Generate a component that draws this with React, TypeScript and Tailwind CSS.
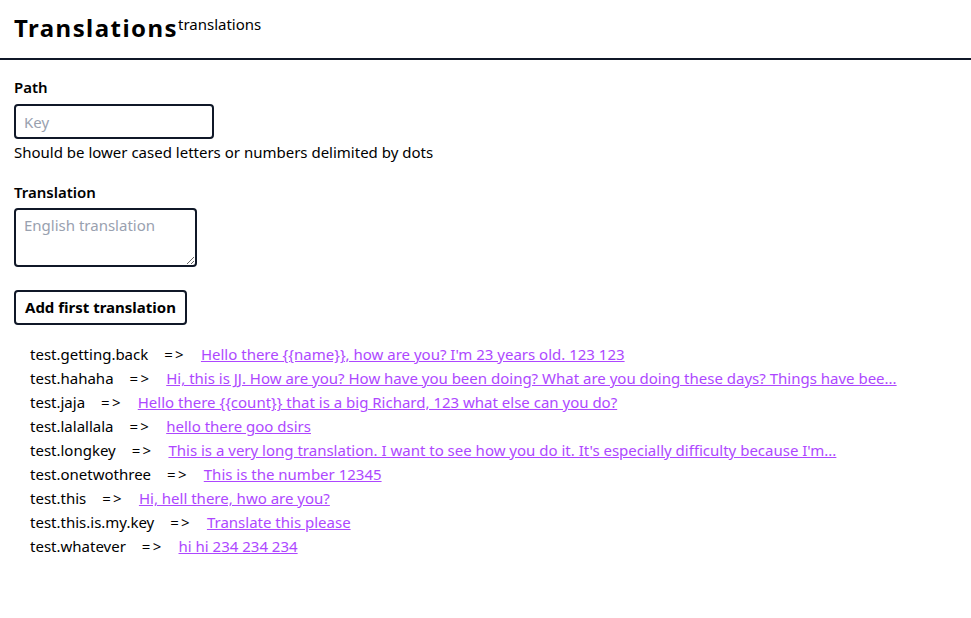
import React from 'react';

const translations: { key: string; value: string }[] = [
  { key: 'test.getting.back', value: "Hello there {{name}}, how are you? I'm 23 years old. 123 123" },
  { key: 'test.hahaha', value: 'Hi, this is JJ. How are you? How have you been doing? What are you doing these days? Things have bee...' },
  { key: 'test.jaja', value: 'Hello there {{count}} that is a big Richard, 123 what else can you do?' },
  { key: 'test.lalallala', value: 'hello there goo dsirs' },
  { key: 'test.longkey', value: "This is a very long translation. I want to see how you do it. It's especially difficulty because I'm..." },
  { key: 'test.onetwothree', value: 'This is the number 12345' },
  { key: 'test.this', value: 'Hi, hell there, hwo are you?' },
  { key: 'test.this.is.my.key', value: 'Translate this please' },
  { key: 'test.whatever', value: 'hi hi 234 234 234' },
];

export default function App() {
  return (
    <div className="min-h-screen bg-white text-black font-['Noto_Sans',sans-serif] text-[15px]">
      <header className="px-[14px] pt-[12px] pb-[14px] border-b-2 border-gray-900">
        <h1 className="text-2xl font-bold tracking-[0.06em] leading-8">
          Translations
          <sup className="text-[15px] font-normal tracking-normal">translations</sup>
        </h1>
      </header>

      <form className="px-[14px] pt-[17px]" onSubmit={(e) => e.preventDefault()}>
        <label className="block font-semibold text-[15px] leading-[20px] mb-[7px]">Path</label>
        <input
          type="text"
          placeholder="Key"
          className="block w-[200px] h-[35px] border-2 border-gray-900 rounded px-2 placeholder-gray-400 outline-none"
        />
        <p className="leading-6 mt-[1px]">Should be lower cased letters or numbers delimited by dots</p>

        <label className="block font-semibold text-[15px] leading-[20px] mt-[18px] mb-[6px]">Translation</label>
        <textarea
          placeholder="English translation"
          className="block w-[183px] h-[59px] border-2 border-gray-900 rounded px-2 py-1 placeholder-gray-400 outline-none"
        />

        <button
          type="submit"
          className="block mt-[23px] h-[35px] px-[9px] border-2 border-gray-900 rounded font-bold"
        >
          Add first translation
        </button>
      </form>

      <ul className="px-[30px] pt-[17px]">
        {translations.map((t) => (
          <li key={t.key} className="leading-6 whitespace-nowrap">
            <span>{t.key}</span>
            <span className="ml-[16px] mr-[15px] tracking-[0.15em]">=&gt;</span>
            <a href="#" className="text-purple-500 underline">
              {t.value}
            </a>
          </li>
        ))}
      </ul>
    </div>
  );
}
